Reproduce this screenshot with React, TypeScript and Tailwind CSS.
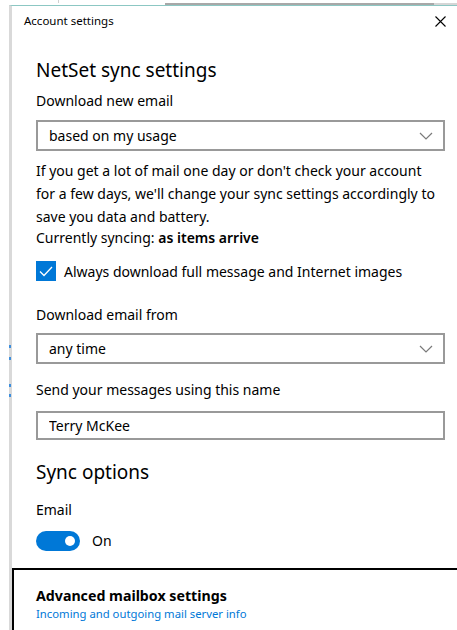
import React, { useState } from "react";

const font = { fontFamily: '"Segoe UI", "Noto Sans", "Liberation Sans", sans-serif' };

const Chevron: React.FC = () => (
    <svg width="14" height="8" viewBox="0 0 14 8" fill="none">
        <path d="M1 1 L7 7 L13 1" stroke="#7a7a7a" strokeWidth="1.2" />
    </svg>
);

const Dropdown: React.FC<{ value: string }> = ({ value }) => (
    <div className="flex items-center justify-between h-[31px] border-2 border-[#999999] pl-[11px] pr-[10px]">
        <span className="text-[14px] text-black">{value}</span>
        <Chevron />
    </div>
);

const App: React.FC = () => {
    const [fullMessages, setFullMessages] = useState(true);
    const [emailOn, setEmailOn] = useState(true);
    const [name, setName] = useState("Terry McKee");

    return (
        <div className="w-[457px] h-[630px] bg-white overflow-hidden flex flex-col" style={font}>
            {/* strip of the app window behind the dialog */}
            <div className="h-[5px] flex shrink-0">
                <div className="w-[58px]" />
                <div className="w-px h-[3px] bg-[#d0d0d0]" />
                <div className="w-[106px]" />
                <div className="w-[269px] h-[2px] mt-[3px] bg-[#a8a8a8]" />
                <div className="flex-1 h-[2px] mt-[3px] bg-[#d6d6d6]" />
            </div>

            <div className="flex flex-1 min-h-0">
                <div className="w-[9px] shrink-0 relative">
                    <div className="absolute left-[9px] top-[340px] w-[2px] h-[3px] bg-[#3c8ddc]" />
                    <div className="absolute left-[9px] top-[352px] w-[2px] h-[3px] bg-[#3c8ddc]" />
                    <div className="absolute left-[9px] top-[379px] w-[2px] h-[3px] bg-[#3c8ddc]" />
                    <div className="absolute left-[9px] top-[389px] w-[2px] h-[3px] bg-[#3c8ddc]" />
                </div>

                <div className="flex-1 flex flex-col border-l-[3px] border-[#d9d9d9] border-t border-t-[#8cc7c3] min-w-0">
                    <div className="flex items-center justify-between h-[30px] pl-3 pr-[11px]">
                        <span className="text-[11.5px] text-black">Account settings</span>
                        <svg width="11" height="11" viewBox="0 0 11 11">
                            <path d="M0.5 0.5 L10.5 10.5 M10.5 0.5 L0.5 10.5" stroke="#000" strokeWidth="1.1" />
                        </svg>
                    </div>

                    <div className="flex-1 flex flex-col pl-6 pr-[12px]">
                        <h1 className="text-[19px] text-black mt-[20px] leading-[28px]">NetSet sync settings</h1>

                        <p className="text-[14px] text-black mt-[7px] leading-[20px]">Download new email</p>
                        <div className="mt-[9px]">
                            <Dropdown value="based on my usage" />
                        </div>

                        <p className="text-[14px] text-black mt-[8px] mr-[6px] leading-[23px]">
                            If you get a lot of mail one day or don't check your account for a few days, we'll change your sync settings accordingly to save you data and battery.
                        </p>

                        <p className="text-[14px] text-black leading-[20px]">
                            Currently syncing: <span className="font-semibold">as items arrive</span>
                        </p>

                        <label className="flex items-center gap-[8px] mt-[13px] h-[20px] cursor-pointer">
                            <span
                                className={`w-[20px] h-[20px] flex items-center justify-center ${fullMessages ? "bg-[#0078d7]" : "border-2 border-[#333]"}`}
                                onClick={() => setFullMessages(!fullMessages)}
                            >
                                {fullMessages && (
                                    <svg width="14" height="11" viewBox="0 0 14 11" fill="none">
                                        <path d="M1 5.5 L5 9.5 L13 1" stroke="#fff" strokeWidth="1.3" />
                                    </svg>
                                )}
                            </span>
                            <span className="text-[14px] text-black">Always download full message and Internet images</span>
                        </label>

                        <p className="text-[14px] text-black mt-[24px] leading-[20px]">Download email from</p>
                        <div className="mt-[8px]">
                            <Dropdown value="any time" />
                        </div>

                        <p className="text-[14px] text-black mt-[16px] leading-[20px]">Send your messages using this name</p>
                        <input
                            className="mt-[11px] h-[29px] border-2 border-[#999999] pl-[11px] text-[14px] text-black outline-none"
                            value={name}
                            onChange={(e) => setName(e.target.value)}
                        />

                        <h2 className="text-[19px] text-black mt-[18px] leading-[28px]">Sync options</h2>

                        <p className="text-[14px] text-black mt-[14px] leading-[20px]">Email</p>
                        <div className="flex items-center gap-[12px] mt-[10px]">
                            <button
                                className={`w-[44px] h-[20px] rounded-full flex items-center px-[5px] ${emailOn ? "bg-[#0078d7] justify-end" : "bg-white border-2 border-[#333] justify-start"}`}
                                onClick={() => setEmailOn(!emailOn)}
                            >
                                <span className={`w-[10px] h-[10px] rounded-full ${emailOn ? "bg-white" : "bg-[#333]"}`} />
                            </button>
                            <span className="text-[14px] text-black">{emailOn ? "On" : "Off"}</span>
                        </div>
                    </div>

                    <div className="h-[62px] shrink-0 border-t-2 border-l-2 border-black pl-[22px] pt-[16px]">
                        <p className="text-[14.2px] font-bold text-black leading-[20px]">Advanced mailbox settings</p>
                        <p className="text-[11.3px] text-[#0078d7] leading-[15px]">Incoming and outgoing mail server info</p>
                    </div>
                </div>
            </div>
        </div>
    );
};

export default App;
